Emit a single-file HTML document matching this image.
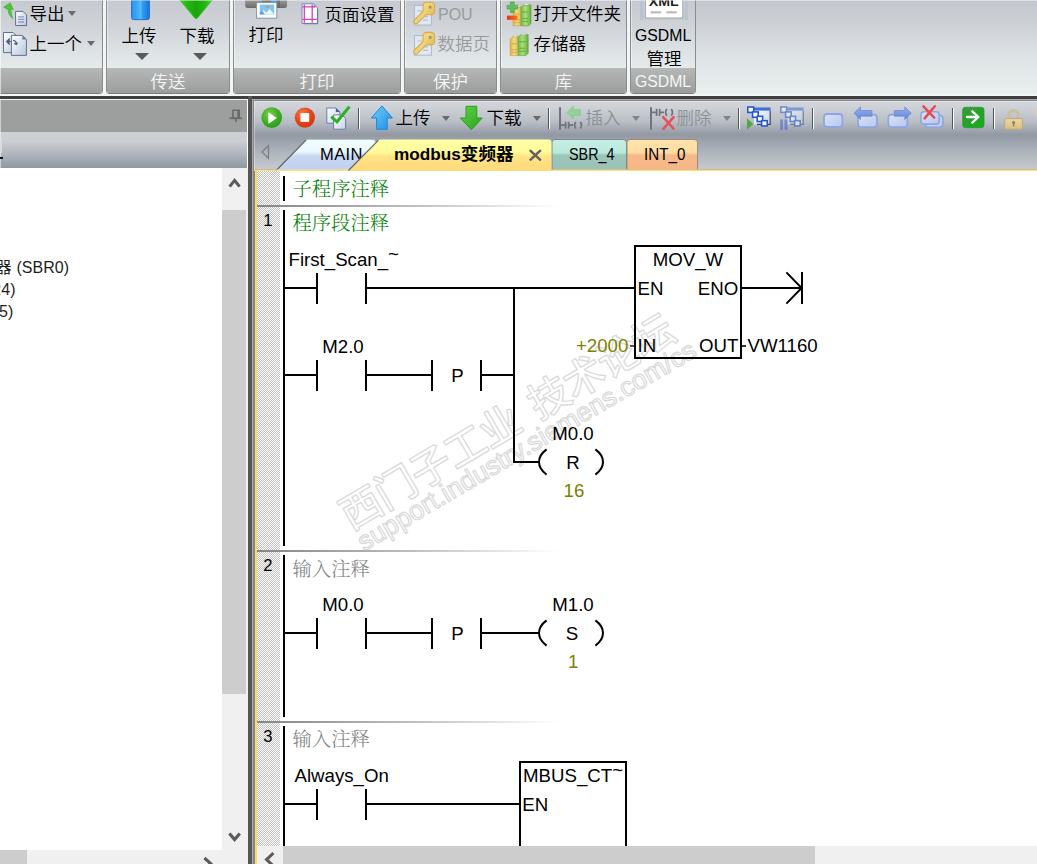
<!DOCTYPE html>
<html lang="zh-CN">
<head>
<meta charset="utf-8">
<title>STEP 7-Micro/WIN SMART</title>
<style>
html,body{margin:0;padding:0;}
body{width:1037px;height:864px;overflow:hidden;position:relative;background:#fff;
 font-family:"Liberation Sans","Noto Sans CJK SC",sans-serif;color:#000;}
.abs{position:absolute;}
.t{position:absolute;white-space:nowrap;line-height:1;transform-origin:0 0;}
/* ribbon */
#ribbon{position:absolute;left:0;top:0;width:1037px;height:94px;
 background:linear-gradient(#c3c7cd 0px,#cdd1d6 25px,#dde2e4 55px,#e9efef 93px);}
.grp{position:absolute;top:0;height:94px;box-shadow:inset 1px 0 0 rgba(255,255,255,0.45);border-left:1px solid #8b8d8d;border-right:1px solid #8b8d8d;
 border-bottom:1px solid #7c7e7e;border-radius:0 0 4px 4px;box-sizing:border-box;
 background:linear-gradient(#c6cad0 0px,#cfd3d8 25px,#dfe4e6 55px,#e5ebeb 68px);overflow:hidden;}
.grp .lb{position:absolute;left:0;right:0;top:68px;height:25px;
 background:linear-gradient(#b6b8b7,#9b9d9c);}
.grp .lt{position:absolute;left:0;right:0;top:73px;text-align:center;color:#f4f6f6;font-size:17.5px;font-weight:350;line-height:19px;}
.gap{position:absolute;top:0;height:94px;width:3px;background:#f1f5f5;}
.rt{font-size:17.5px;font-weight:350;}
.dis{color:#9a9a9a;}
.dd{position:absolute;width:0;height:0;border-left:4px solid transparent;border-right:4px solid transparent;border-top:5px solid #6a6a6a;}
.dd2{position:absolute;width:0;height:0;border-left:7px solid transparent;border-right:7px solid transparent;border-top:7px solid #5a5a5a;}
/* bars */
#hl1{left:0;top:94px;width:1037px;height:2px;background:#f4f6f6;}
#hdark{left:0;top:96px;width:1037px;height:3px;background:#3e3e3e;}
#hl2{left:0;top:99px;width:248px;height:1px;background:#f2f2f2;}
#hl3{left:252px;top:99px;width:785px;height:1px;background:#a9a9a9;}
#hl4{left:253px;top:100px;width:784px;height:1px;background:#8a8a8a;}
/* left panel */
#lp-head{left:0;top:100px;width:247px;height:32px;background:#9d9f9e;}
#lp-grad{left:0;top:132px;width:247px;height:36px;background:linear-gradient(#cdd0d5 0px,#cbced3 9px,#b4b9c1 20px,#8f98a3 36px);}
#lp-body{left:0;top:168px;width:222px;height:682px;background:#fff;}
#lp-vs{left:222px;top:168px;width:26px;height:682px;background:#f0f0f0;}
#lp-vt{left:222px;top:210px;width:24px;height:484px;background:#cdcdcd;}
#lp-hs{left:0;top:850px;width:248px;height:14px;background:#f0f0f0;}
#lp-ht{left:0;top:850px;width:27px;height:14px;background:#cdcdcd;}
.tree{font-size:16px;color:#1e1e1e;}
/* splitter */
#sp0{left:247px;top:99px;width:1px;height:33px;background:#fff;}
#sp1{left:248px;top:96px;width:4px;height:768px;background:#555;}
#sp2{left:252px;top:99px;width:1px;height:765px;background:#a9a9a9;}
#sp3{left:253px;top:100px;width:2px;height:764px;background:#858585;}
/* toolbar */
#tb{left:254px;top:101px;width:783px;height:68px;box-shadow:inset 1px 1px 0 rgba(255,255,255,0.35);
 background:linear-gradient(#d3d6db 0px,#cdd0d6 7px,#b9bec5 21px,#9aa1ab 31px,#9299a3 34px,#9ea5ae 41px,#b3b8bf 54px,#c5c8cd 67px);}
#tb-b1{left:254px;top:169px;width:783px;height:1px;background:#9b9b9b;}
#tb-b2{left:254px;top:170px;width:783px;height:1px;background:#ffe58a;}
.sep{position:absolute;top:108px;width:1px;height:21px;background:#4d525c;}
.sep:after{content:"";position:absolute;left:1px;top:0;width:1px;height:21px;background:#fff;}
/* editor */
#ed-yl{left:255px;top:170px;width:2px;height:694px;background:#ffd966;}
#ed-gut{left:257px;top:171px;width:23px;height:675px;
 background-color:#fff;background-image:conic-gradient(#c0c0c0 25%,#fff 0 50%,#c0c0c0 0 75%,#fff 0);background-size:2px 2px;}
#ed-hs{left:257px;top:846px;width:780px;height:18px;background:#f0f0f0;}
#ed-ht{left:283px;top:846px;width:532px;height:18px;background:#cdcdcd;}
</style>
</head>
<body>
<div id="ribbon"></div>
<div class="abs" id="hl1"></div><div class="abs" id="hdark"></div><div class="abs" id="hl2"></div><div class="abs" id="hl3"></div><div class="abs" id="hl4"></div>

<!-- RIBBON GROUPS -->
<div class="grp" style="left:-4px;width:107px;border-radius:0 0 4px 0;"><div class="lb"></div></div>
<div class="gap" style="left:103px"></div>
<div class="grp" style="left:106px;width:124px;"><div class="lb"></div><div class="lt">传送</div></div>
<div class="gap" style="left:230px"></div>
<div class="grp" style="left:233px;width:168px;"><div class="lb"></div><div class="lt">打印</div></div>
<div class="gap" style="left:401px"></div>
<div class="grp" style="left:404px;width:93px;"><div class="lb"></div><div class="lt">保护</div></div>
<div class="gap" style="left:497px"></div>
<div class="grp" style="left:500px;width:127px;"><div class="lb"></div><div class="lt">库</div></div>
<div class="gap" style="left:627px"></div>
<div class="grp" style="left:630px;width:66px;"><div class="lb"></div><div class="lt" style="font-size:15.8px;top:72px;font-weight:400">GSDML</div></div>

<svg class="abs" id="rbi" style="left:0;top:0" width="700" height="68" viewBox="0 0 700 68">
<defs>
<linearGradient id="rDoc" x1="0" y1="0" x2="1" y2="1"><stop offset="0" stop-color="#ffffff"/><stop offset="1" stop-color="#b9c6df"/></linearGradient>
<linearGradient id="rBlue" x1="0" y1="0" x2="1" y2="0"><stop offset="0" stop-color="#2a96ee"/><stop offset="0.35" stop-color="#3faaf6"/><stop offset="0.5" stop-color="#58b9fa"/><stop offset="0.62" stop-color="#2f9cf0"/><stop offset="1" stop-color="#1c72da"/></linearGradient>
<linearGradient id="rGreen" x1="0" y1="0" x2="1" y2="0"><stop offset="0" stop-color="#4fd23b"/><stop offset="0.2" stop-color="#27b915"/><stop offset="0.5" stop-color="#18a50a"/><stop offset="0.8" stop-color="#27b915"/><stop offset="1" stop-color="#52d43e"/></linearGradient>
<linearGradient id="rPr" x1="0" y1="0" x2="0" y2="1"><stop offset="0" stop-color="#b9b9b9"/><stop offset="0.5" stop-color="#8e8e8e"/><stop offset="1" stop-color="#6a6a6a"/></linearGradient>
<linearGradient id="rKey" x1="0" y1="0" x2="1" y2="1"><stop offset="0" stop-color="#f4e08c"/><stop offset="1" stop-color="#e2bc58"/></linearGradient>
<linearGradient id="rBy" x1="0" y1="0" x2="1" y2="0"><stop offset="0" stop-color="#d9b452"/><stop offset="0.5" stop-color="#f3dc7e"/><stop offset="1" stop-color="#dcb858"/></linearGradient>
<linearGradient id="rBg" x1="0" y1="0" x2="1" y2="0"><stop offset="0" stop-color="#78bd4a"/><stop offset="0.45" stop-color="#a6e07c"/><stop offset="1" stop-color="#64ac3a"/></linearGradient>
<linearGradient id="rRed" x1="0" y1="0" x2="1" y2="0"><stop offset="0" stop-color="#e8301a"/><stop offset="1" stop-color="#f47a22"/></linearGradient>
<g id="keyico">
<rect x="0.4" y="3.6" width="17" height="19.6" fill="#e2e8f2" stroke="#a9b9cd" stroke-width="1"/>
<path d="M3.5 9 H8 M9 14.8 H14 M9 18.4 H14" stroke="#b4c0d4" stroke-width="1.2"/>
<path d="M2 19.8 L10.5 11.2" stroke="#d6ac4e" stroke-width="5.6" stroke-linecap="round"/>
<rect x="9" y="0.4" width="11.6" height="12.6" rx="3.6" fill="url(#rKey)" stroke="#d6ac4e" stroke-width="1.1"/>
<path d="M2 19.8 L10.8 11" stroke="#eed27a" stroke-width="3.4" stroke-linecap="round"/>
<rect x="14.9" y="4.1" width="2.6" height="2.6" fill="#9a9478"/>
</g>
<g id="books">
<path d="M0 2.2 L2.6 0 H8 V18.8 H0z" fill="url(#rBy)" stroke="#c79f45" stroke-width="0.6"/>
<path d="M8 0 L10.8 -2.1 H18 L18 16.4 L15.6 18.8 H8z" fill="url(#rBg)" stroke="#5e9f38" stroke-width="0.6"/>
<path d="M2.8 0 L4.6 -1.6 H7.6 L6.2 0z M10.6 -2 L12.2 -3.4 H16.4 L15 -2z" fill="#fff" stroke="#9a9a9a" stroke-width="0.4"/>
<path d="M1 7 H7 M1 13 H7 M1 15.6 H7" stroke="#cfa748" stroke-width="0.9"/>
<path d="M9 5 H15 M9 11.5 H15 M9 14.5 H15" stroke="#62a63a" stroke-width="0.9"/>
</g>
</defs>
<!-- export -->
<path d="M15.6 11.4 H23 L26.6 15 V25.6 H15.6z" fill="url(#rDoc)" stroke="#5f6f90" stroke-width="1"/>
<path d="M18 16.8 H24 M18 19.4 H24 M18 22 H24" stroke="#8fa0c4" stroke-width="1.3"/>
<path d="M12.9 18.6 C9.6 16.4 8.2 12.6 8 9.4 L3.6 7.2 L10.2 2.8 L13.4 9.6 L10.9 9 C11 12.2 11.6 15.4 12.9 18.6z" fill="#4cc33a" stroke="#3aae2c" stroke-width="0.6"/>
<!-- previous -->
<path d="M3.5 32.5 H13.2 L17.2 36.5 V52.6 H3.5z" fill="url(#rDoc)" stroke="#63718f" stroke-width="1"/>
<path d="M11.4 35.4 H22.4 L26.4 39.4 V55.4 H11.4z" fill="url(#rDoc)" stroke="#63718f" stroke-width="1"/>
<path d="M22.4 35.4 V39.4 H26.4z" fill="#6b7c9e"/>
<path d="M6.3 41.6 L9.2 38.6 V44.6z M9 41.6 H11" fill="#4d5f86" stroke="#4d5f86" stroke-width="1"/>
<path d="M13 40.4 C15.4 40.6 16.4 42 16.2 44.4 M16.6 44.8 L14.4 43.4 M16.4 44.8 L17.4 42.4" fill="none" stroke="#4d5f86" stroke-width="1.3"/>
<!-- upload (blue) -->
<path d="M131.6 0 H149.4 V17.6 Q149.4 19.6 147.4 19.6 H133.6 Q131.6 19.6 131.6 17.6z" fill="url(#rBlue)" stroke="#1b66c8" stroke-width="0.9"/>
<!-- download (green) -->
<path d="M179.8 0 H212.2 L197.6 18 Q196.2 19.4 194.8 18z" fill="url(#rGreen)" stroke="#34bf22" stroke-width="0.8"/>
<!-- printer -->
<rect x="245.2" y="-4" width="41.8" height="12" rx="2.5" fill="url(#rPr)"/>
<rect x="262" y="0" width="18" height="8" fill="#5e5e5e" opacity="0.55"/>
<rect x="270.8" y="0" width="5.6" height="1.8" fill="#5aa4f2"/>
<rect x="256.6" y="2.6" width="20.2" height="15.6" fill="#fff" stroke="#8394ad" stroke-width="1"/>
<rect x="259.8" y="4.6" width="14.4" height="10" fill="#7cc6f0"/>
<path d="M259.8 14.6 L263.6 10 L266.4 12.8 L269.6 8.8 L274.2 14.6z" fill="#eaf4fc"/>
<path d="M259.8 14.6 V12.6 L262.4 11 L265 14.6z" fill="#3f7fd0" opacity="0.7"/>
<circle cx="267.8" cy="6.6" r="1.4" fill="#f08a50"/>
<!-- page setup -->
<path d="M302 3.8 H313.6 L317.4 7.6 V23.4 H302z" fill="#fff" stroke="#7686a6" stroke-width="1"/>
<path d="M313.6 3.8 V7.6 H317.4z" fill="#9aa8c4"/>
<path d="M317.8 9 V23.8 H304" fill="none" stroke="#55657f" stroke-width="0.9" opacity="0.7"/>
<path d="M304.3 4.4 V22.8 M312.2 4.4 V22.8 M302.4 6.9 H315 M302.4 19.4 H316.8" stroke="#d33fc4" stroke-width="1.3" fill="none"/>
<!-- keys -->
<use href="#keyico" x="414" y="1.8"/>
<use href="#keyico" x="414" y="32"/>
<!-- library icons -->
<use href="#books" x="513" y="7"/>
<path d="M510.4 2 H514.2 V5.4 H517.6 V9 H514.2 V12.4 H510.4 V9 H507 V5.4 H510.4z" fill="#62bd60" stroke="#4aa34a" stroke-width="0.7"/>
<rect x="507" y="15.6" width="10.6" height="4.2" fill="url(#rRed)"/>
<use href="#books" x="510.2" y="36.8"/>
<!-- xml -->
<rect x="640.2" y="-3" width="47.6" height="22.8" fill="#b9c2cf"/>
<rect x="643.2" y="-3" width="41.6" height="22.8" fill="#c6ced9"/>
<rect x="645.4" y="-3" width="37.4" height="21" fill="#fff" stroke="#a9a3a3" stroke-width="1"/>
<rect x="650.6" y="11.2" width="10.6" height="2.2" fill="#bfbaba"/><rect x="666.4" y="11.2" width="10.4" height="2.2" fill="#bfbaba"/>
<text x="663.8" y="5.8" text-anchor="middle" font-family="'Liberation Sans',sans-serif" font-weight="bold" font-size="13.5px" fill="#1f1f1f" textLength="30" lengthAdjust="spacingAndGlyphs">XML</text>
</svg>
<div class="abs" style="left:0;top:0;width:1px;height:94px;background:rgba(255,255,255,0.55)"></div>
<!-- ribbon texts -->
<span class="t rt" style="left:29.5px;top:5.5px">导出</span>
<span class="t rt" style="left:29.5px;top:36px">上一个</span>
<span class="t rt" style="left:121.5px;top:27.5px">上传</span>
<span class="t rt" style="left:179.5px;top:27.5px">下载</span>
<span class="t rt" style="left:248.5px;top:27px">打印</span>
<span class="t rt" style="left:324.5px;top:6.5px">页面设置</span>
<span class="t rt dis" style="left:438px;top:6.5px;font-size:16px">POU</span>
<span class="t rt dis" style="left:437.5px;top:36px">数据页</span>
<span class="t rt" style="left:533.5px;top:6px">打开文件夹</span>
<span class="t rt" style="left:533.5px;top:36px">存储器</span>
<span class="t rt" style="left:635px;top:27.5px;font-size:15.8px;font-weight:400">GSDML</span>
<span class="t rt" style="left:646.5px;top:50.5px">管理</span>
<div class="dd" style="left:68px;top:11px"></div>
<div class="dd" style="left:87px;top:41px"></div>
<div class="dd2" style="left:135px;top:53px"></div>
<div class="dd2" style="left:193px;top:53px"></div>

<!-- LEFT PANEL -->
<div class="abs" id="lp-head"></div>
<div class="abs" id="lp-grad"></div>
<div class="abs" id="lp-body"></div>
<div class="abs" id="lp-vs"></div><div class="abs" id="lp-vt"></div>
<div class="abs" id="lp-hs"></div><div class="abs" id="lp-ht"></div>
<span class="t tree" style="left:-4.5px;top:260px">器</span><span class="t tree" style="left:16.5px;top:260px">(SBR0)</span>
<span class="t tree" style="left:-10.3px;top:282px">R4)</span>
<span class="t tree" style="left:-1px;top:303.5px">5)</span>
<div class="abs" style="left:0;top:100px;width:1px;height:68px;background:rgba(255,255,255,0.5)"></div>
<div class="abs" style="left:0;top:138px;width:2px;height:15px;background:#dcdcdc;border-radius:0 1px 1px 0"></div>
<div class="abs" style="left:0;top:157px;width:3px;height:2px;background:#111"></div>

<svg class="abs" style="left:0;top:100px" width="254" height="764" viewBox="0 100 254 764">
<g fill="none" stroke="#5b5b5b" stroke-width="3.1">
<path d="M229.6 186.6 L234.6 180.4 L239.6 186.6"/>
<path d="M229.4 833.4 L234.6 839.6 L239.8 833.4"/>
<path d="M204.4 858 L210.6 863.4 L204.4 869"/>
</g>
<g fill="none" stroke="#666a68" stroke-width="1.6">
<path d="M233 118 V110.2 H239.2 V118"/>
<path d="M238.4 110.4 V118" stroke-width="2.2"/>
<path d="M229.6 118.2 H241.8" stroke-width="1.8"/>
<path d="M236 119 V121.8" stroke-width="1.8"/>
</g>
</svg>
<!-- SPLITTER -->
<div class="abs" id="sp0"></div><div class="abs" id="sp1"></div><div class="abs" id="sp2"></div><div class="abs" id="sp3"></div>

<!-- TOOLBAR -->
<div class="abs" id="tb"></div><div class="abs" id="tb-b1"></div><div class="abs" id="tb-b2"></div>
<div class="sep" style="left:358px"></div>
<div class="sep" style="left:548px"></div>
<div class="sep" style="left:738px"></div>
<div class="sep" style="left:812px"></div>
<div class="sep" style="left:952px"></div>
<div class="sep" style="left:993px"></div>
<span class="t rt" style="left:395.5px;top:110px">上传</span>
<span class="t rt" style="left:486.5px;top:110px">下载</span>
<span class="t rt dis" style="left:585.5px;top:110px;color:#8e9096">插入</span>
<span class="t rt dis" style="left:676.5px;top:110px;color:#8e9096">删除</span>
<div class="dd" style="left:442px;top:116px"></div>
<div class="dd" style="left:533px;top:116px"></div>
<div class="dd" style="left:632px;top:116px;border-top-color:#80848a"></div>
<div class="dd" style="left:723px;top:116px;border-top-color:#80848a"></div>

<svg class="abs" id="tabs" style="left:254px;top:134px" width="783" height="38" viewBox="254 134 783 38">
<defs>
<linearGradient id="gMain" x1="0" y1="139" x2="0" y2="170" gradientUnits="userSpaceOnUse"><stop offset="0" stop-color="#f2fdff"/><stop offset="0.4" stop-color="#eaf8fe"/><stop offset="0.56" stop-color="#c6d6f1"/><stop offset="1" stop-color="#c3d2ef"/></linearGradient>
<linearGradient id="gAct" x1="0" y1="139" x2="0" y2="171" gradientUnits="userSpaceOnUse"><stop offset="0" stop-color="#ffffa6"/><stop offset="0.4" stop-color="#fffb98"/><stop offset="0.55" stop-color="#ffe486"/><stop offset="1" stop-color="#ffd97a"/></linearGradient>
<linearGradient id="gSbr" x1="0" y1="139" x2="0" y2="170" gradientUnits="userSpaceOnUse"><stop offset="0" stop-color="#c6efe5"/><stop offset="0.44" stop-color="#bbe8dc"/><stop offset="0.52" stop-color="#9dc6ba"/><stop offset="1" stop-color="#9ac2b7"/></linearGradient>
<linearGradient id="gInt" x1="0" y1="139" x2="0" y2="170" gradientUnits="userSpaceOnUse"><stop offset="0" stop-color="#ffe4ad"/><stop offset="0.44" stop-color="#ffdca0"/><stop offset="0.52" stop-color="#f8ba8a"/><stop offset="1" stop-color="#f7b586"/></linearGradient>
</defs>
<path d="M276.5 170 L305.5 140.5 Q307 139 309 139 L372 139 Q376 139 376 143 L376 170 Z" fill="url(#gMain)"/>
<path d="M307 139.3 L372 139.3 Q375.6 139.3 375.8 142" fill="none" stroke="#9aa1a9" stroke-width="0.8"/>
<path d="M276.7 170 L306 140.2" fill="none" stroke="#5e6266" stroke-width="1.2"/>
<path d="M552 170 V142.5 Q552 139.5 555 139.5 H623 Q626.5 139.5 626.5 142.5 V170 Z" fill="url(#gSbr)" stroke="#7d8a88" stroke-width="1"/>
<path d="M627 170 V142.5 Q627 139.5 630 139.5 H694 Q697.5 139.5 697.5 142.5 V170 Z" fill="url(#gInt)" stroke="#9a8c80" stroke-width="1"/>
<text x="320" y="160" font-family="'Liberation Sans',sans-serif" font-size="16.5px" letter-spacing="0.4" fill="#000">MAIN</text>
<rect x="254" y="169.5" width="783" height="1.5" fill="#ffe07f"/>
<path d="M348 171 L378 140.5 Q379 139.5 381 139.5 L548.5 139.5 Q551.5 139.5 551.5 142.5 L551.5 171 Z" fill="url(#gAct)"/>
<path d="M348.5 170.5 L378.3 140.3" fill="none" stroke="#606468" stroke-width="1.2"/>
<path d="M268.5 145.5 L262 152 L268.5 158.5 Z" fill="none" stroke="#7a7d82" stroke-width="1.3"/>
<path d="M529.8 150.2 L540.8 160.4 M540.8 150.2 L529.8 160.4" stroke="#626262" stroke-width="2.5" fill="none"/>
</svg>
<span class="t" style="left:394px;top:145.5px;font-size:17.6px;font-weight:bold"><span style="font-size:17.2px">modbus</span>变频器</span>
<span class="t" style="left:569px;top:146px;font-size:16.5px;transform:scaleX(0.87)">SBR_4</span>
<span class="t" style="left:643.5px;top:146px;font-size:16.5px;transform:scaleX(0.92)">INT_0</span>
<svg class="abs" id="tbi" style="left:254px;top:100px" width="783" height="34" viewBox="254 100 783 34">
<defs>
<radialGradient id="rgG" cx="0.4" cy="0.35" r="0.75"><stop offset="0" stop-color="#86cf52"/><stop offset="0.55" stop-color="#3fae22"/><stop offset="1" stop-color="#1c9a12"/></radialGradient>
<radialGradient id="rgR" cx="0.38" cy="0.3" r="0.8"><stop offset="0" stop-color="#f57a4a"/><stop offset="0.55" stop-color="#e2441a"/><stop offset="1" stop-color="#cf3408"/></radialGradient>
<linearGradient id="lgB" x1="0" y1="0" x2="1" y2="1"><stop offset="0" stop-color="#6fcdfb"/><stop offset="1" stop-color="#1f8fe3"/></linearGradient>
<linearGradient id="lgGr" x1="0" y1="0" x2="1" y2="1"><stop offset="0" stop-color="#63d14e"/><stop offset="1" stop-color="#27a418"/></linearGradient>
<linearGradient id="lgDoc" x1="0" y1="0" x2="1" y2="1"><stop offset="0" stop-color="#ffffff"/><stop offset="1" stop-color="#c3d2ee"/></linearGradient>
<linearGradient id="lgBm" x1="0" y1="0" x2="1" y2="1"><stop offset="0" stop-color="#dbe3f6"/><stop offset="1" stop-color="#b7c6ec"/></linearGradient>
<linearGradient id="lgAr" x1="0" y1="0" x2="0" y2="1"><stop offset="0" stop-color="#9ab2ec"/><stop offset="1" stop-color="#6284d4"/></linearGradient>
<linearGradient id="lgSq" x1="0" y1="0" x2="1" y2="1"><stop offset="0" stop-color="#3a9a3c"/><stop offset="1" stop-color="#10ad18"/></linearGradient>
<linearGradient id="lgLk" x1="0" y1="0" x2="0" y2="1"><stop offset="0" stop-color="#ecd9a4"/><stop offset="1" stop-color="#d9c081"/></linearGradient>
</defs>
<!-- run -->
<circle cx="271.7" cy="117.6" r="10.3" fill="url(#rgG)"/>
<path d="M268.4 112.2 L276.9 117.9 L268.4 123.8 Z" fill="#fff"/>
<!-- stop -->
<circle cx="304.9" cy="117.6" r="10.1" fill="url(#rgR)"/>
<rect x="300.4" y="113.1" width="8.8" height="9" rx="0.8" fill="#fff" fill-opacity="0.95"/>
<!-- compile -->
<path d="M326.8 108 h9 l4 4 v11.2 h-13z" fill="url(#lgDoc)" stroke="#6c7ea6" stroke-width="1"/>
<path d="M335.8 108 v4 h4z" fill="#47608f"/>
<path d="M333.6 114.9 h8.5 l3.5 3.5 v10.8 h-12z" fill="url(#lgDoc)" stroke="#6c7ea6" stroke-width="1"/>
<path d="M331.2 116.6 L337 121.8 L349.4 106.6" fill="none" stroke="#2bb11b" stroke-width="3" stroke-linejoin="miter"/>
<!-- upload arrow -->
<path d="M381.9 105.9 L392.4 118 L387.2 118 L387.2 129.2 L376.6 129.2 L376.6 118 L371.4 118 Z" fill="url(#lgB)" stroke="#1a86dc" stroke-width="1" stroke-linejoin="round"/>
<!-- download arrow -->
<path d="M466 106.3 L476.8 106.3 L476.8 118 L482.3 118 L471.4 129.7 L460.3 118 L466 118 Z" fill="url(#lgGr)" stroke="#2aa01b" stroke-width="1" stroke-linejoin="round"/>
<!-- insert (disabled) -->
<g stroke="#6f737b" fill="none">
<path d="M560 107.3 V129.8" stroke-width="2"/>
<path d="M561 125.2 H565.5 M568.5 125.2 H573" stroke-width="1.8"/>
<path d="M565.6 121.8 V128.6 M568.6 121.8 V128.6" stroke-width="1.7"/>
<path d="M575.8 122 Q573.4 125.2 575.8 128.5 M580.3 122 Q582.7 125.2 580.3 128.5" stroke-width="1.7"/>
</g>
<path d="M567 112.5 L573.3 106 L573.3 109.6 L580.2 109.6 L580.2 115.4 L573.3 115.4 L573.3 119 Z" fill="#92d394" stroke="#7cc680" stroke-width="0.6"/>
<!-- delete (disabled) -->
<g stroke="#6f737b" fill="none">
<path d="M651 107.3 V129.8" stroke-width="2"/>
<path d="M652 112.4 H656.5 M659.5 112.4 H664" stroke-width="1.8"/>
<path d="M656.6 108.8 V116 M659.6 108.8 V116" stroke-width="1.7"/>
<path d="M666.8 109 Q664.4 112.4 666.8 115.8 M671.3 109 Q673.7 112.4 671.3 115.8" stroke-width="1.7"/>
</g>
<path d="M663.2 117.2 L673.6 128.6 M673.6 117.2 L663.4 128.8" stroke="#e3535b" stroke-width="2.6" fill="none" stroke-linecap="round"/>
<!-- tree icon 1 -->
<g>
<rect x="754" y="107.4" width="16.6" height="17.2" fill="url(#lgDoc)"/>
<rect x="754" y="107.4" width="16.6" height="3.2" fill="#3f6fd8"/>
<path d="M770.2 110.6 V124.4 H757" fill="none" stroke="#3b475f" stroke-width="1.2"/>
<g fill="#fff" stroke="#2859d0" stroke-width="1.6">
<rect x="747.8" y="107" width="5.9" height="5.4"/>
<rect x="752.6" y="111.9" width="5.6" height="5.4"/>
<rect x="757.2" y="116.3" width="5.4" height="5.2"/>
<rect x="761.6" y="120.7" width="5.6" height="5.2"/>
</g>
<path d="M747 118.2 L753.2 124 L747 129.8 Z" fill="#4cab3c"/>
</g>
<!-- tree icon 2 (faded) -->
<g opacity="0.55">
<rect x="787" y="107.4" width="16.6" height="17.2" fill="url(#lgDoc)"/>
<rect x="787" y="107.4" width="16.6" height="3.2" fill="#3f6fd8"/>
<path d="M803.2 110.6 V124.4 H790" fill="none" stroke="#3b475f" stroke-width="1.2"/>
<g fill="#fff" stroke="#2859d0" stroke-width="1.6">
<rect x="780.8" y="107" width="5.9" height="5.4"/>
<rect x="785.6" y="111.9" width="5.6" height="5.4"/>
<rect x="790.2" y="116.3" width="5.4" height="5.2"/>
<rect x="794.6" y="120.7" width="5.6" height="5.2"/>
</g>
<rect x="780.2" y="119.5" width="2.7" height="10.3" fill="#3a66d4"/>
<rect x="784.5" y="119.5" width="3" height="10.3" fill="#3a66d4"/>
</g>
<!-- bookmark rect -->
<rect x="824" y="114" width="18.4" height="13" rx="3.2" fill="url(#lgBm)" stroke="#8ea6e2" stroke-width="1.8"/>
<!-- prev bookmark -->
<rect x="858" y="114.6" width="19" height="12.6" rx="3.2" fill="url(#lgBm)" stroke="#8ea6e2" stroke-width="1.8"/>
<path d="M854 113.2 L860.4 106.8 L860.4 110.5 L872 110.5 L872 116.2 L860.4 116.2 L860.4 119.6 Z" fill="url(#lgAr)" stroke="#6a88d4" stroke-width="0.7"/>
<!-- next bookmark -->
<rect x="888.3" y="114.6" width="19" height="12.6" rx="3.2" fill="url(#lgBm)" stroke="#8ea6e2" stroke-width="1.8"/>
<path d="M911.2 113.2 L904.8 106.8 L904.8 110.5 L894.3 110.5 L894.3 116.2 L904.8 116.2 L904.8 119.6 Z" fill="url(#lgAr)" stroke="#6a88d4" stroke-width="0.7"/>
<!-- delete bookmarks -->
<rect x="925.3" y="115.5" width="17.6" height="11.8" rx="3.2" fill="url(#lgBm)" stroke="#8ea6e2" stroke-width="1.6"/>
<rect x="921" y="111.8" width="18.2" height="12.3" rx="3.2" fill="url(#lgBm)" stroke="#8ea6e2" stroke-width="1.6"/>
<path d="M923.4 106.4 L934.2 117.6 M934.8 106.2 L924.6 118.4" stroke="#e84a54" stroke-width="2.5" fill="none" stroke-linecap="round"/>
<!-- goto -->
<rect x="962.7" y="107.3" width="21.3" height="20.4" rx="2.6" fill="url(#lgSq)" stroke="#2a9a30" stroke-width="0.8"/>
<path d="M967 117 H978 M972.3 111.3 L978.4 117 L972.3 122.6" fill="none" stroke="#fff" stroke-width="2.3" stroke-linecap="round" stroke-linejoin="round"/>
<!-- lock -->
<path d="M1009 119 V114.6 Q1009 110.8 1013.5 110.8 Q1018 110.8 1018 114.6 V119" fill="none" stroke="#c9bea6" stroke-width="3"/>
<rect x="1004.8" y="118.6" width="17.6" height="10.6" rx="1.2" fill="url(#lgLk)" stroke="#bba987" stroke-width="1"/>
<circle cx="1013.6" cy="122.4" r="1.5" fill="#8d8262"/><rect x="1012.9" y="122.4" width="1.5" height="4" fill="#8d8262"/>
<rect x="1035" y="110" width="2" height="5.5" fill="#d9ccb0"/>
</svg>
<!-- EDITOR -->
<div class="abs" id="ed-yl"></div>
<div class="abs" id="ed-gut"></div>
<svg class="abs" id="lad" style="left:257px;top:171px" width="780" height="675" viewBox="257 171 780 675">
<defs><linearGradient id="sg" x1="0" x2="1" y1="0" y2="0"><stop offset="0" stop-color="#858585"/><stop offset="0.5" stop-color="#bdbdbd"/><stop offset="1" stop-color="#ffffff"/></linearGradient></defs>
<rect x="257" y="205" width="303" height="2" fill="url(#sg)"/>
<rect x="257" y="550" width="303" height="2" fill="url(#sg)"/>
<rect x="257" y="721" width="303" height="2" fill="url(#sg)"/>
<g fill="none" stroke="#d9d9d9" stroke-width="1.2" stroke-linejoin="round">
<text transform="translate(351 531) rotate(-30.5)" font-family="'Liberation Sans','Noto Sans CJK SC',sans-serif" font-size="41.2px" font-weight="500" letter-spacing="-0.9" word-spacing="6">西门子工业 技术论坛</text>
<text transform="translate(364 551.5) rotate(-30.4)" font-family="'Liberation Sans',sans-serif" font-size="26.75px">support.industry.siemens.com/cs</text>
</g>
<g fill="#000" shape-rendering="crispEdges">
<rect x="283" y="176" width="2" height="24.5"/>
<rect x="283" y="210" width="2" height="336"/>
<rect x="283" y="555" width="2" height="161.5"/>
<rect x="283" y="726" width="2" height="120"/>
<rect x="285" y="287" width="31" height="2"/>
<rect x="316" y="273" width="2" height="31"/><rect x="365" y="273" width="2" height="31"/>
<rect x="367" y="287" width="267" height="2"/>
<rect x="742" y="287" width="60" height="2"/>
<rect x="801" y="272" width="2" height="32"/>
<path d="M634 245h108v114h-108z M636 247v110h104v-110z" fill-rule="evenodd"/>
<rect x="513" y="288" width="2" height="175"/>
<rect x="285" y="374" width="31" height="2"/>
<rect x="316" y="360" width="2" height="31"/><rect x="365" y="360" width="2" height="31"/>
<rect x="367" y="374" width="64" height="2"/>
<rect x="431" y="360" width="2" height="31"/><rect x="480" y="360" width="2" height="31"/>
<rect x="482" y="374" width="31" height="2"/>
<rect x="513" y="461" width="26" height="2"/>
<rect x="630" y="345" width="4" height="2" fill="#555"/><rect x="742" y="345" width="4" height="2" fill="#333"/>
<rect x="285" y="632" width="31" height="2"/>
<rect x="316" y="618" width="2" height="31"/><rect x="365" y="618" width="2" height="31"/>
<rect x="367" y="632" width="64" height="2"/>
<rect x="431" y="618" width="2" height="31"/><rect x="480" y="618" width="2" height="31"/>
<rect x="482" y="632" width="57" height="2"/>
<rect x="285" y="803" width="31" height="2"/>
<rect x="316" y="789" width="2" height="31"/><rect x="365" y="789" width="2" height="31"/>
<rect x="367" y="803" width="152" height="2"/>
<path d="M519 761h108.3v90h-108.3z M521 763v88h104.3v-88z" fill-rule="evenodd"/>
</g>
<g fill="none" stroke="#000" stroke-width="2">
<path d="M786.4 272.4 L801.6 288 L786.4 303.6"/>
<path d="M546.6 449.4 Q539 455 539 462 Q539 469 546.6 474.6" /><path d="M595.4 449.4 Q603 455 603 462 Q603 469 595.4 474.6" />
<path d="M546.6 620.4 Q539 626 539 633 Q539 640 546.6 645.6" /><path d="M595.4 620.4 Q603 626 603 633 Q603 640 595.4 645.6" />
</g>
<g font-family="'Liberation Sans',sans-serif" font-size="18.67px" fill="#000">
<text x="288.5" y="265.5" >First_Scan_<tspan dy="-6">~</tspan></text>
<text x="343" y="352.6" text-anchor="middle">M2.0</text>
<text x="457.5" y="382" text-anchor="middle">P</text>
<text x="688" y="265.5" text-anchor="middle">MOV_W</text>
<text x="637.5" y="294.5" >EN</text>
<text x="738.3" y="294.5" text-anchor="end">ENO</text>
<text x="637.5" y="352.2" >IN</text>
<text x="738.5" y="352.2" text-anchor="end">OUT</text>
<text x="628.3" y="352.2" text-anchor="end" fill="#808000">+2000</text>
<text x="747.5" y="352.2" >VW1160</text>
<text x="573" y="439.5" text-anchor="middle">M0.0</text>
<text x="573" y="468.5" text-anchor="middle">R</text>
<text x="574" y="497.3" text-anchor="middle" fill="#808000">16</text>
<text x="343" y="610.8" text-anchor="middle">M0.0</text>
<text x="457.5" y="640" text-anchor="middle">P</text>
<text x="573" y="610.8" text-anchor="middle">M1.0</text>
<text x="572" y="639.5" text-anchor="middle">S</text>
<text x="573.3" y="668.3" text-anchor="middle" fill="#808000">1</text>
<text x="294.5" y="781.6" >Always_On</text>
<text x="523" y="781.8" >MBUS_CT<tspan dy="-6">~</tspan></text>
<text x="522.2" y="810.7" >EN</text>
</g>
<g font-family="'Liberation Sans',sans-serif" font-size="16.67px" fill="#000">
<text x="263.3" y="225.9">1</text>
<text x="263.3" y="570.9">2</text>
<text x="263.3" y="741.6">3</text>
</g>
<g font-family="'Liberation Serif','Noto Serif CJK SC',serif" font-size="19.33px" font-weight="300">
<text x="292.5" y="196" fill="#008000">子程序注释</text>
<text x="292.5" y="230" fill="#008000">程序段注释</text>
<text x="292.5" y="575.5" fill="#808080">输入注释</text>
<text x="292.5" y="746.3" fill="#808080">输入注释</text>
</g>
</svg>
<div class="abs" id="ed-hs"></div><div class="abs" id="ed-ht"></div>
<svg class="abs" style="left:257px;top:846px" width="30" height="18" viewBox="257 846 30 18">
<path d="M273.4 853 L266.6 859.6 L273.4 866" fill="none" stroke="#5b5b5b" stroke-width="3.1"/>
</svg>
<div class="abs" style="left:0;top:0;width:1037px;height:1px;background:rgba(255,255,255,0.45)"></div>

</body>
</html>
